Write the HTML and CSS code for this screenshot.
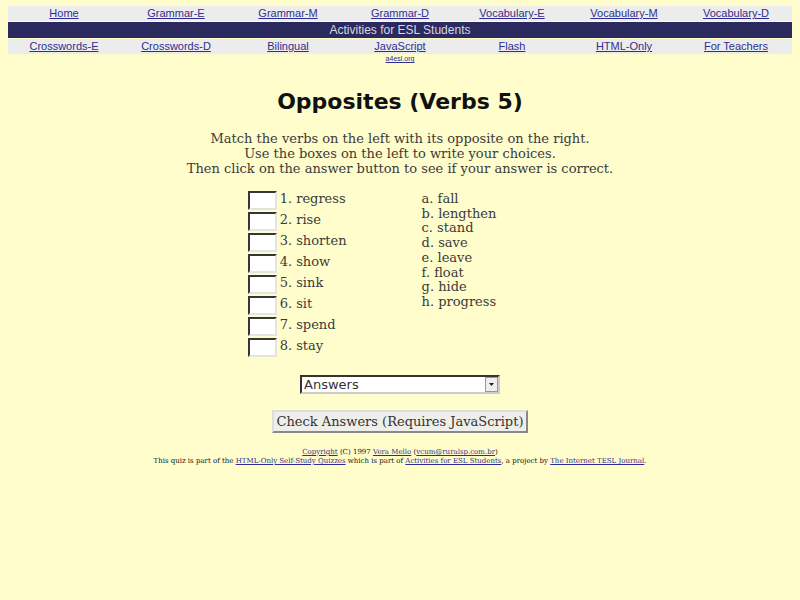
FILE: index.html
```html
<!DOCTYPE html>
<html lang="en">

<head>
    <meta charset="UTF-8">
    <title>Opposites (Verbs 5)</title>
    <link rel="stylesheet" href="styles.css">
</head>

<body>
    <div class="topnav">
        <div class="topnav__row">
            <a href="#">Home</a>
            <a href="#">Grammar-E</a>
            <a href="#">Grammar-M</a>
            <a href="#">Grammar-D</a>
            <a href="#">Vocabulary-E</a>
            <a href="#">Vocabulary-M</a>
            <a href="#">Vocabulary-D</a>
        </div>
        <div class="topnav__title">Activities for ESL Students</div>
        <div class="topnav__row">
            <a href="#">Crosswords-E</a>
            <a href="#">Crosswords-D</a>
            <a href="#">Bilingual</a>
            <a href="#">JavaScript</a>
            <a href="#">Flash</a>
            <a href="#">HTML-Only</a>
            <a href="#">For Teachers</a>
        </div>
        <div class="topnav__site"><a href="#">a4esl.org</a></div>
    </div>

    <h1 class="quiz-title">Opposites (Verbs 5)</h1>

    <p class="instructions">
        Match the verbs on the left with its opposite on the right.<br>
        Use the boxes on the left to write your choices.<br>
        Then click on the answer button to see if your answer is correct.
    </p>

    <form class="quiz">
        <div class="quiz__cols">
            <ul class="quiz__left">
                <li><input type="text" class="quiz__box"> 1. regress</li>
                <li><input type="text" class="quiz__box"> 2. rise</li>
                <li><input type="text" class="quiz__box"> 3. shorten</li>
                <li><input type="text" class="quiz__box"> 4. show</li>
                <li><input type="text" class="quiz__box"> 5. sink</li>
                <li><input type="text" class="quiz__box"> 6. sit</li>
                <li><input type="text" class="quiz__box"> 7. spend</li>
                <li><input type="text" class="quiz__box"> 8. stay</li>
            </ul>
            <ul class="quiz__right">
                <li>a. fall</li>
                <li>b. lengthen</li>
                <li>c. stand</li>
                <li>d. save</li>
                <li>e. leave</li>
                <li>f. float</li>
                <li>g. hide</li>
                <li>h. progress</li>
            </ul>
        </div>

        <select class="quiz__answers">
            <option>Answers</option>
        </select>

        <button type="button" class="quiz__check">Check Answers (Requires JavaScript)</button>
    </form>

    <div class="footer">
        <a href="#">Copyright</a> (C) 1997 <a href="#">Vera Mello</a> (<a href="#">vcum@ruralsp.com.br</a>)<br>
        This quiz is part of the <a href="#">HTML-Only Self-Study Quizzes</a> which is part of
        <a href="#">Activities for ESL Students</a>, a project by <a href="#">The Internet TESL Journal</a>.
    </div>
</body>

</html>
```

FILE: styles.css
```css
body {
    margin: 6px 8px;
    background-color: #fffdcc;
    color: #3a3a3a;
    font-family: 'DejaVu Serif', serif;
}

a {
    color: #2f2f8f;
}

/* header menu */
.topnav {
    font-family: 'Liberation Sans', Arial, sans-serif;
    font-size: 11px;
}

.topnav__row {
    display: grid;
    grid-template-columns: repeat(7, 1fr);
    background-color: #ececec;
    height: 15px;
    line-height: 15px;
    text-align: center;
}

.topnav__title {
    background-color: #2b2a5e;
    color: #d8d8e0;
    font-size: 12px;
    height: 16px;
    line-height: 16px;
    margin: 1px 0;
    text-align: center;
}

.topnav__site {
    font-size: 7px;
    line-height: 9px;
    text-align: center;
}

/* heading + text */
.quiz-title {
    font-family: 'DejaVu Sans', sans-serif;
    font-size: 22px;
    font-weight: 700;
    color: #111;
    text-align: center;
    margin: 26px 0 0;
}

.instructions {
    font-size: 13px;
    line-height: 15px;
    text-align: center;
    margin: 17px 0 15px;
}

/* matching quiz */
.quiz {
    display: flex;
    flex-direction: column;
    align-items: center;
}

.quiz__cols {
    display: flex;
    gap: 75px;
    margin-right: 56px;
}

.quiz__left,
.quiz__right {
    list-style: none;
    margin: 0;
    padding: 0;
    font-size: 13px;
}

.quiz__left li {
    display: flex;
    align-items: flex-start;
    gap: 3px;
    height: 21px;
    line-height: 15px;
}

.quiz__box {
    width: 25px;
    height: 15px;
    padding: 0;
    margin: 0;
    border: 2px inset #e4e4e0;
    border-top-color: #8a8a8a;
    border-left-color: #8a8a8a;
    background: #fff;
}

.quiz__right {
    padding-top: 1px;
}

.quiz__right li {
    line-height: 14.7px;
}

.quiz__answers {
    appearance: none;
    margin-top: 16px;
    width: 200px;
    height: 19px;
    padding: 0 2px;
    font-family: 'DejaVu Sans', sans-serif;
    font-size: 13px;
    color: #333;
    border: 2px inset #ccc;
    border-top-color: #888;
    border-left-color: #888;
    background: #fff url('data:image/svg+xml,%3Csvg xmlns="http://www.w3.org/2000/svg" width="13" height="15"%3E%3Crect x=".5" y=".5" width="12" height="14" fill="%23eee" stroke="%23999"/%3E%3Cpath d="M4 6h5l-2.5 3z" fill="%23222"/%3E%3C/svg%3E') no-repeat right 0 center;
}

.quiz__check {
    margin-top: 16px;
    height: 23px;
    padding: 0 3px;
    font-family: 'DejaVu Serif', serif;
    font-size: 13px;
    color: #333;
    background: #eeeeea;
    border: 2px outset #ddd;
}

/* credits */
.footer {
    font-size: 7px;
    line-height: 9px;
    text-align: center;
    margin-top: 15px;
    color: #111;
}
```
